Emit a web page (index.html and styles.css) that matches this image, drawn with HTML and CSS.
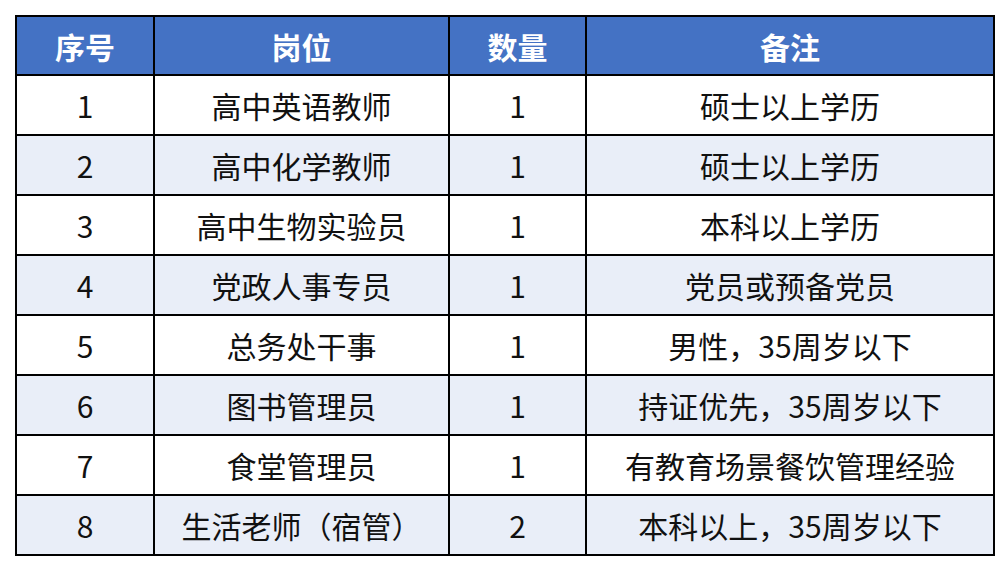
FILE: index.html
```html
<!DOCTYPE html>
<html lang="zh">
<head>
<meta charset="utf-8">
<link rel="stylesheet" href="styles.css">
</head>
<body>
<table class="grid">
  <colgroup>
    <col class="c1"><col class="c2"><col class="c3"><col class="c4">
  </colgroup>
  <thead>
    <tr><th>序号</th><th>岗位</th><th>数量</th><th>备注</th></tr>
  </thead>
  <tbody>
    <tr><td>1</td><td>高中英语教师</td><td>1</td><td>硕士以上学历</td></tr>
    <tr class="alt"><td>2</td><td>高中化学教师</td><td>1</td><td>硕士以上学历</td></tr>
    <tr><td>3</td><td>高中生物实验员</td><td>1</td><td>本科以上学历</td></tr>
    <tr class="alt"><td>4</td><td>党政人事专员</td><td>1</td><td>党员或预备党员</td></tr>
    <tr><td>5</td><td>总务处干事</td><td>1</td><td>男性，35周岁以下</td></tr>
    <tr class="alt"><td>6</td><td>图书管理员</td><td>1</td><td>持证优先，35周岁以下</td></tr>
    <tr><td>7</td><td>食堂管理员</td><td>1</td><td>有教育场景餐饮管理经验</td></tr>
    <tr class="alt"><td>8</td><td>生活老师（宿管）</td><td>2</td><td>本科以上，35周岁以下</td></tr>
  </tbody>
</table>
</body>
</html>
```
FILE: styles.css
```css
html, body {
  margin: 0;
  padding: 0;
  background: #ffffff;
}
body {
  padding: 15px 0 0 15px;
  font-family: "Noto Sans CJK SC", "Noto Sans", sans-serif;
}
.grid {
  border-collapse: collapse;
  table-layout: fixed;
  width: 978px;
}
.c1 { width: 138px; }
.c2 { width: 295px; }
.c3 { width: 137px; }
.c4 { width: 408px; }
.grid th, .grid td {
  border: 2px solid #000000;
  text-align: center;
  vertical-align: middle;
  padding: 0;
  font-size: 30px;
  line-height: 1;
  color: #111111;
}
.grid th {
  background: #4472c4;
  color: #ffffff;
  font-weight: 700;
  height: 57px;
}
.grid td {
  height: 58px;
}
.grid tr.alt td {
  background: #e9eef8;
}
```
